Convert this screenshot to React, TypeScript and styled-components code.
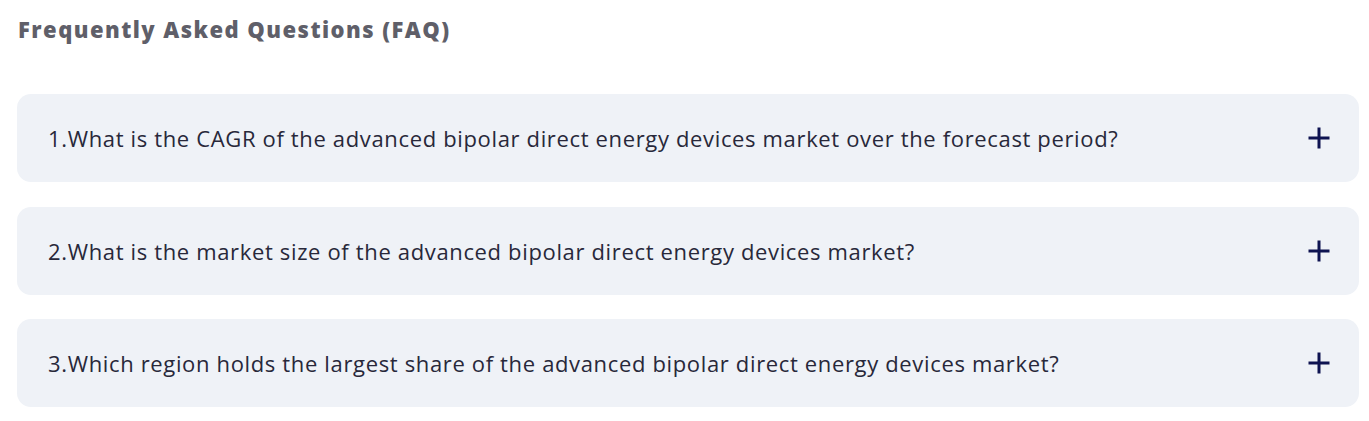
import React from 'react';
import styled, { createGlobalStyle } from 'styled-components';

const GlobalStyle = createGlobalStyle`
  html, body {
    margin: 0;
    padding: 0;
    background: #ffffff;
  }
`;

const Section = styled.section`
  padding: 14px 10px 0 17px;
`;

const Heading = styled.h2`
  margin: 0 0 50px 1px;
  font-family: 'Open Sans', 'DejaVu Sans', sans-serif;
  font-weight: 800;
  font-size: 22px;
  line-height: 30px;
  letter-spacing: 1.45px;
  color: #5f5f69;
`;

const List = styled.div`
  display: flex;
  flex-direction: column;
  gap: 24.5px;
`;

const Item = styled.button`
  display: flex;
  align-items: center;
  justify-content: space-between;
  width: 100%;
  height: 88px;
  padding: 0 28px 0 31px;
  border: none;
  border-radius: 14px;
  background: #eff2f7;
  cursor: pointer;
  text-align: left;
`;

const Question = styled.span`
  font-family: 'Open Sans', 'Liberation Sans', sans-serif;
  font-size: 22px;
  letter-spacing: 0.65px;
  color: #28283a;
`;

const PlusIcon = () => (
  <svg width="24" height="24" viewBox="0 0 24 24" aria-hidden="true">
    <path d="M12 1.5v21M1.5 12h21" stroke="#0e1351" strokeWidth="3" fill="none" />
  </svg>
);

const questions = [
  'What is the CAGR of the advanced bipolar direct energy devices market over the forecast period?',
  'What is the market size of the advanced bipolar direct energy devices market?',
  'Which region holds the largest share of the advanced bipolar direct energy devices market?',
];

const App: React.FC = () => (
  <>
    <GlobalStyle />
    <Section>
      <Heading>Frequently Asked Questions (FAQ)</Heading>
      <List>
        {questions.map((q, i) => (
          <Item key={i}>
            <Question>
              {i + 1}.{q}
            </Question>
            <PlusIcon />
          </Item>
        ))}
      </List>
    </Section>
  </>
);

export default App;
